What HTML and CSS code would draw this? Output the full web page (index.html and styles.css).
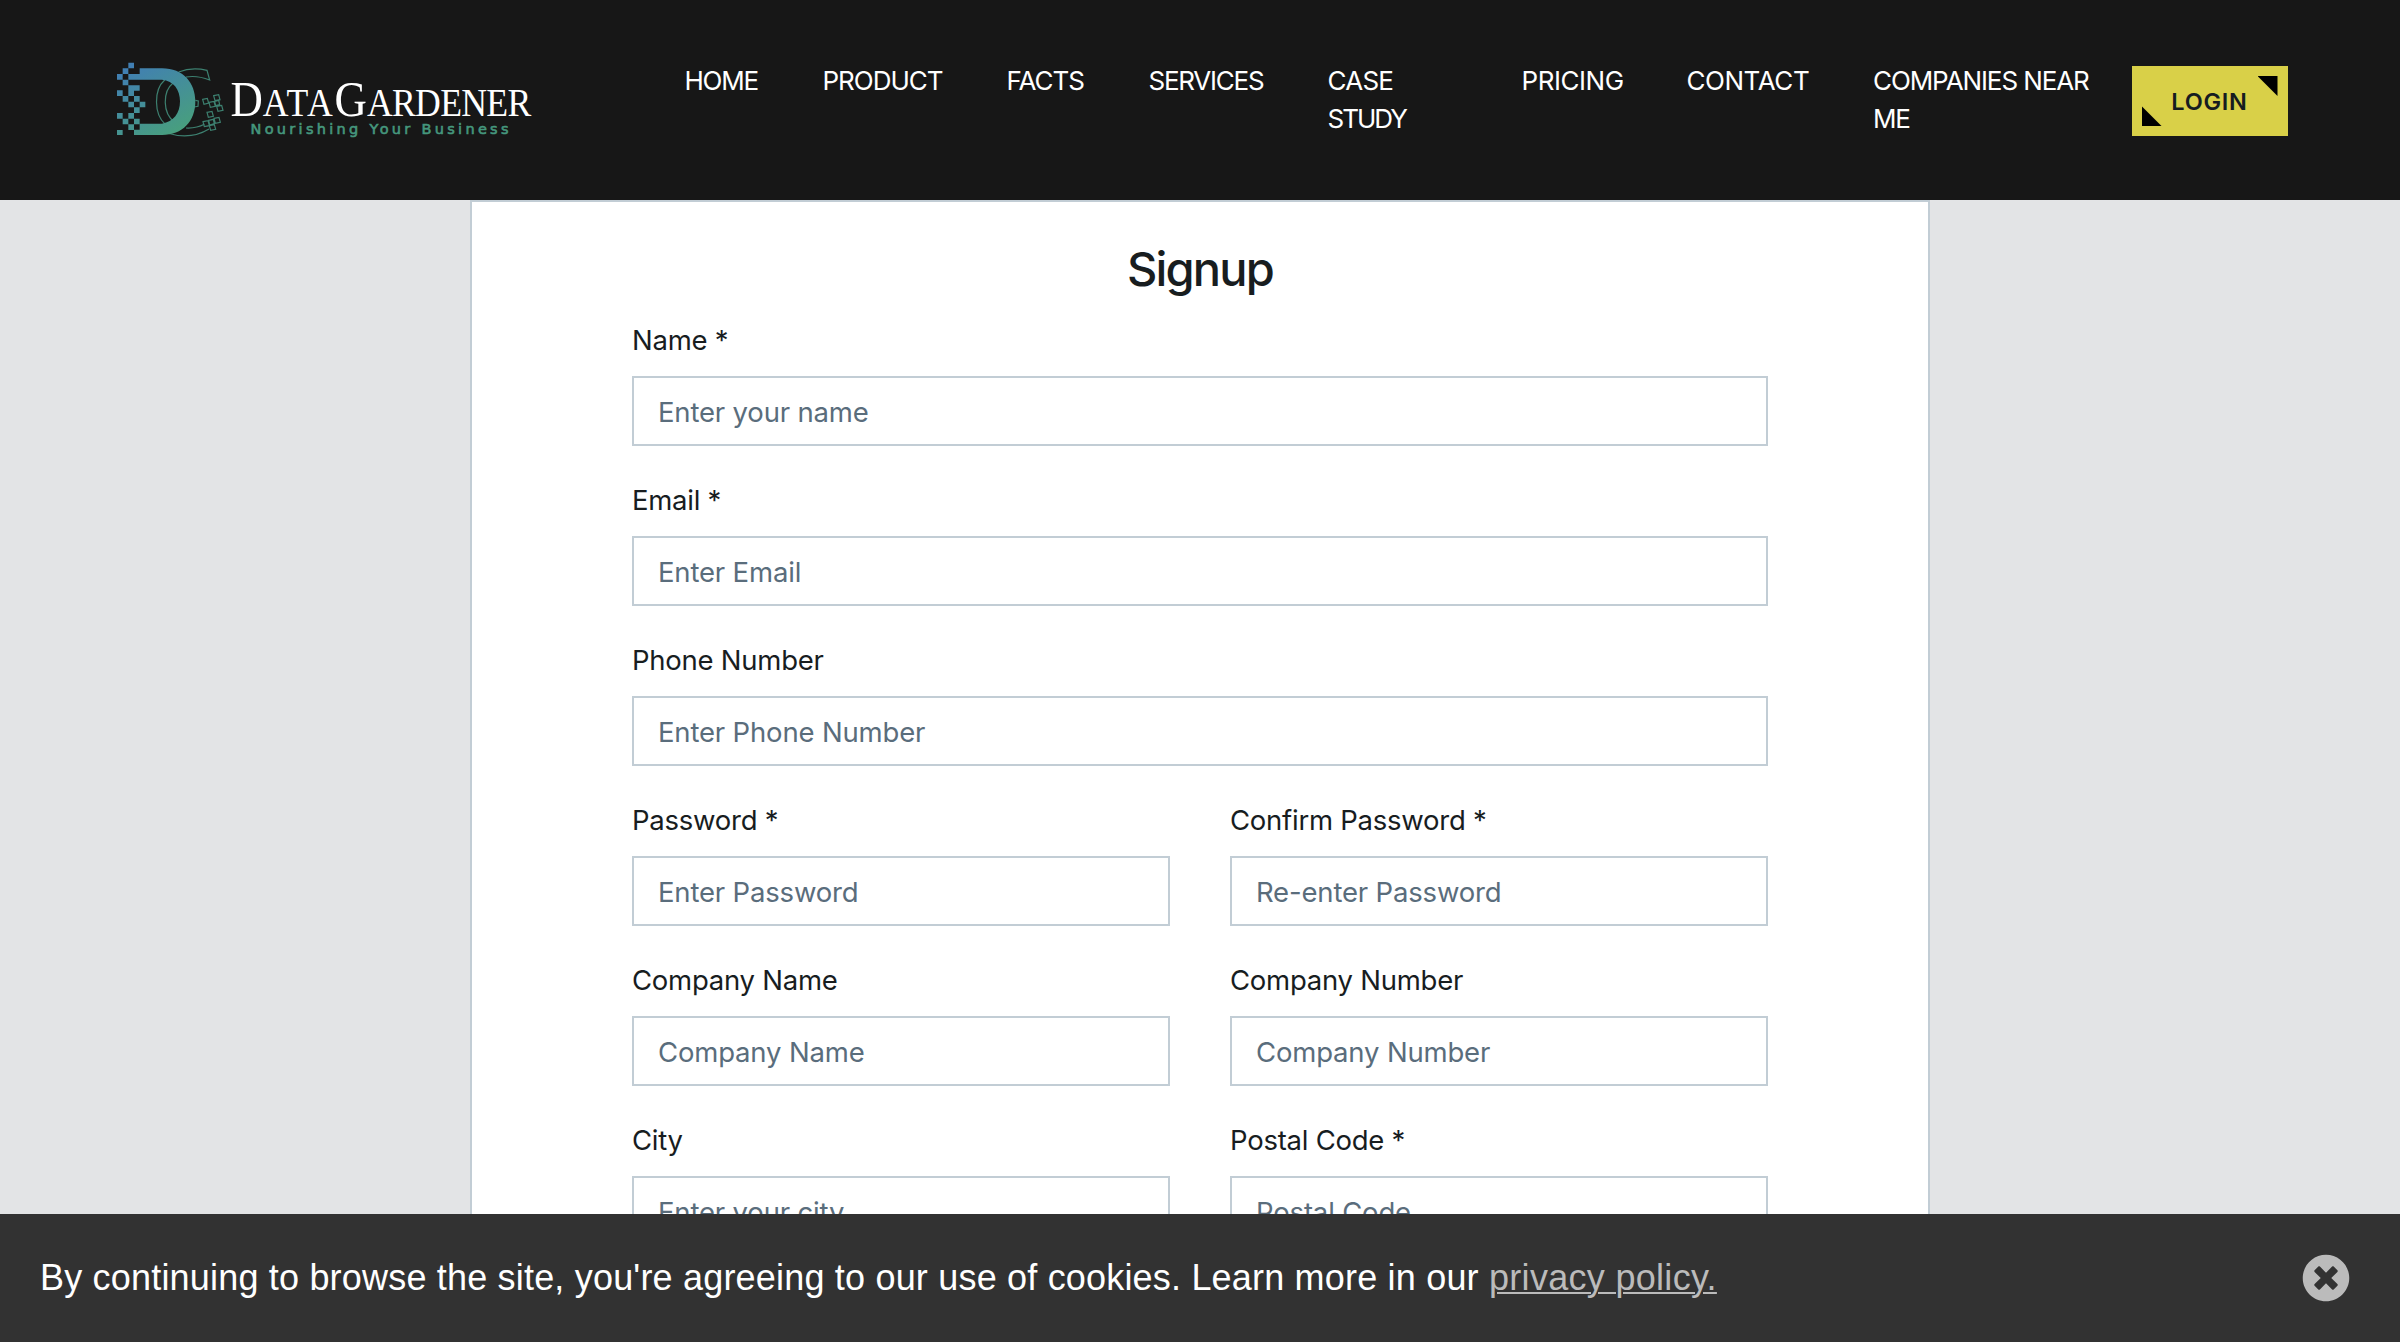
FILE: index.html
```
<!DOCTYPE html>
<html lang="en">
<head>
<meta charset="utf-8">
<title>Signup - DataGardener</title>
<link rel="stylesheet" href="styles.css">
</head>
<body>
<header class="header">
  <a class="logo" aria-label="DataGardener">
    <svg width="450" height="100" viewBox="0 0 450 100">
      <defs>
        <linearGradient id="leaf" gradientUnits="userSpaceOnUse" x1="70" y1="20" x2="190" y2="235">
          <stop offset="0" stop-color="#417fb3"/>
          <stop offset="1" stop-color="#48a07c"/>
        </linearGradient>
      </defs>
      <g transform="translate(12 8) scale(.33333)">
        <g fill="none" stroke="#3d8070" stroke-width="3.6">
          <path d="M200 42C225 32 255 30 285 37L293 66C265 55 240 54 222 57"/>
          <path d="M158 66C125 95 125 168 160 199M184 74C151 100 151 166 188 193"/>
          <path d="M165 225C210 239 255 235 291 213M222 210C243 211 262 207 277 199"/>
          <path d="M250 127L259 129L258 145L246 147"/>
          <path d="M272 124l14-3 4 14-14 4zM305 113l15-3 4 15-15 3zM291 133l15-3 4 15-15 3zM314 145l15-3 4 15-15 3zM285 163l15-3 4 15-15 3zM306 181l15-3 4 15-15 3zM273 191l15-3 4 15-15 3zM292 203l15-3 4 14-15 3zM290 187l14-3 3 13-14 4zM308 130l12-3 3 13-12 3z"/>
        </g>
        <g fill="url(#leaf)">
          <path d="M83 31H150C214 31 250 75 250 130C250 190 212 231 150 231H66V215H83V197H150C185 192 204 165 204 130C204 95 185 68 150 65H49V48H83Z"/>
          <path d="M49 14h17v17H49zM32 31h17v17H32zM15 48h17v17H15zM32 65h17v17H32zM49 82h34v16H66v16H49zM15 97h17v17H15zM32 114h17v17H32zM66 114h17v17H66zM49 131h17v17H49zM83 131h17v17H83zM66 148h17v17H66zM15 165h17v17H15zM49 165h17v17H49zM32 182h17v17H32zM66 182h17v17H66zM49 199h17v17H49zM15 216h17v15H15z"/>
        </g>
      </g>
      <text class="wordmark" x="130.5" y="65.7" textLength="300" lengthAdjust="spacingAndGlyphs">D<tspan class="small wider">ATA</tspan>G<tspan class="small">ARDENER</tspan></text>
      <text class="tagline" x="150.500" y="83.7" textLength="258">Nourishing Your Business</text>
    </svg>
  </a>
  <nav class="nav">
    <a class="t4">HOME</a>
    <a class="t3">PRODUCT</a>
    <a class="t3">FACTS</a>
    <a class="t4">SERVICES</a>
    <a><span class="t2">CASE</span><br><span class="t5">STUDY</span></a>
    <a class="t1">PRICING</a>
    <a class="t1">CONTACT</a>
    <a><span class="t6">COMPANIES NEAR</span><br><span class="t4">ME</span></a>
  </nav>
  <a class="login">LOGIN</a>
</header>
<main class="page">
  <form class="card">
    <h1 class="title">Signup</h1>
    <div class="fields">
      <label class="field wide"><span class="label">Name *</span><input class="input" placeholder="Enter your name"></label>
      <label class="field wide"><span class="label">Email *</span><input class="input" placeholder="Enter Email"></label>
      <label class="field wide"><span class="label">Phone Number</span><input class="input" placeholder="Enter Phone Number"></label>
      <label class="field"><span class="label">Password *</span><input class="input" placeholder="Enter Password"></label>
      <label class="field"><span class="label">Confirm Password *</span><input class="input" placeholder="Re-enter Password"></label>
      <label class="field"><span class="label">Company Name</span><input class="input" placeholder="Company Name"></label>
      <label class="field"><span class="label">Company Number</span><input class="input" placeholder="Company Number"></label>
      <label class="field"><span class="label">City</span><input class="input" placeholder="Enter your city"></label>
      <label class="field"><span class="label">Postal Code *</span><input class="input" placeholder="Postal Code"></label>
    </div>
  </form>
</main>
<aside class="cookies">
  <p class="notice">By continuing to browse the site, you're agreeing to our use of cookies. Learn more in our <a class="policy">privacy policy.</a></p>
  <svg class="close" viewBox="0 0 512 512"><path d="M256 8C119 8 8 119 8 256s111 248 248 248 248-111 248-248S393 8 256 8zm121.600 313.100c4.700 4.700 4.700 12.300 0 17L338 377.600c-4.700 4.700-12.300 4.700-17 0L256 312l-65.100 65.600c-4.700 4.700-12.300 4.700-17 0L134.400 338c-4.700-4.700-4.700-12.300 0-17l65.600-65-65.600-65.100c-4.700-4.700-4.700-12.300 0-17l39.600-39.600c4.700-4.700 12.300-4.700 17 0l65 65.700 65.100-65.600c4.700-4.700 12.300-4.700 17 0l39.600 39.600c4.700 4.700 4.700 12.300 0 17L312 256l65.600 65.100z"/></svg>
</aside>
</body>
</html>
```
FILE: styles.css
```
* { box-sizing: border-box; }

body {
  margin: 0;
  height: 100vh;
  display: flex;
  flex-direction: column;
  overflow: hidden;
  background: #e3e4e6;
  color: #181d1f;
  font-family: Inter, "Liberation Sans", sans-serif;
}

/* Header */
.header {
  flex: none;
  display: flex;
  align-items: flex-start;
  height: 200px;
  padding-left: 100px;
  background: #171717;
}
.logo { width: 584.5px; margin-top: 50px; }
.logo svg { display: block; overflow: visible; }
.wordmark { fill: #fff; font: 51.5px "Liberation Serif", serif; }
.small { font-size: 41px; letter-spacing: -.8px; }
.wider { letter-spacing: 2px; }
.tagline {
  fill: #45977d;
  stroke: #45977d;
  stroke-width: .6px;
  font: 14.5px "DejaVu Sans", sans-serif;
}

.nav {
  display: grid;
  grid-template-columns: 138px 184px 142px 179px 194px 165px 186.5px 258.5px;
  margin-top: 62px;
  color: #fff;
  font-size: 26px;
  line-height: 38px;
  white-space: nowrap;
}
.t1 { letter-spacing: -.45px; }
.t2 { letter-spacing: -.75px; }
.t3 { letter-spacing: -1px; }
.t4 { letter-spacing: -1.25px; }
.t5 { letter-spacing: -2px; }
.t6 { letter-spacing: -1.1px; }

.login {
  position: relative;
  width: 156px;
  height: 70px;
  margin-top: 66px;
  background: #d9d048;
  color: #161c20;
  font-size: 23.5px;
  font-weight: 600;
  letter-spacing: .75px;
  line-height: 71px;
  text-align: center;
}
.login::before,
.login::after {
  content: "";
  position: absolute;
  width: 20px;
  height: 20px;
  background: #000;
}
.login::before { top: 10px; right: 10px; clip-path: polygon(0 0, 100% 0, 100% 100%); }
.login::after { bottom: 10px; left: 10px; clip-path: polygon(0 0, 100% 100%, 0 100%); }

/* Signup form */
.page {
  flex: 1;
  min-height: 0;
  overflow: hidden;
}
.card {
  width: 1460px;
  height: 1300px;
  margin: 0 auto;
  padding: 38px 160px 0;
  border: 2px solid #c2cdd5;
  background: #fff;
}
.title {
  margin: 0 0 21px;
  font-size: 47px;
  font-weight: 500;
  letter-spacing: -1.8px;
  line-height: 58px;
  text-align: center;
}
.fields {
  display: grid;
  grid-template-columns: 1fr 1fr;
  column-gap: 60px;
  row-gap: 33px;
}
.wide { grid-column: 1 / -1; }
.field {
  display: flex;
  flex-direction: column;
  gap: 15px;
  font-size: 27.5px;
  letter-spacing: -.17px;
  line-height: 42px;
}
.input {
  width: 100%;
  height: 70px;
  padding: 2px 24px 0;
  border: 2px solid #c2cdd5;
  border-radius: 0;
  background: #fff;
  font: inherit;
  letter-spacing: inherit;
}
.input::placeholder { color: #5a6d7c; opacity: 1; }
.label { letter-spacing: -.25px; }

/* Cookie notice */
.cookies {
  flex: none;
  display: flex;
  align-items: center;
  justify-content: space-between;
  height: 128px;
  padding: 0 50px 0 40px;
  background: #323232;
}
.notice {
  margin: 0;
  color: #fff;
  font: 36px "Liberation Sans", sans-serif;
  letter-spacing: .19px;
}
.policy {
  color: #bbb;
  letter-spacing: .3px;
  text-decoration: underline;
  text-decoration-thickness: 2px;
  text-underline-offset: 2px;
}
.close { width: 48px; height: 48px; fill: #bbb; }
```
